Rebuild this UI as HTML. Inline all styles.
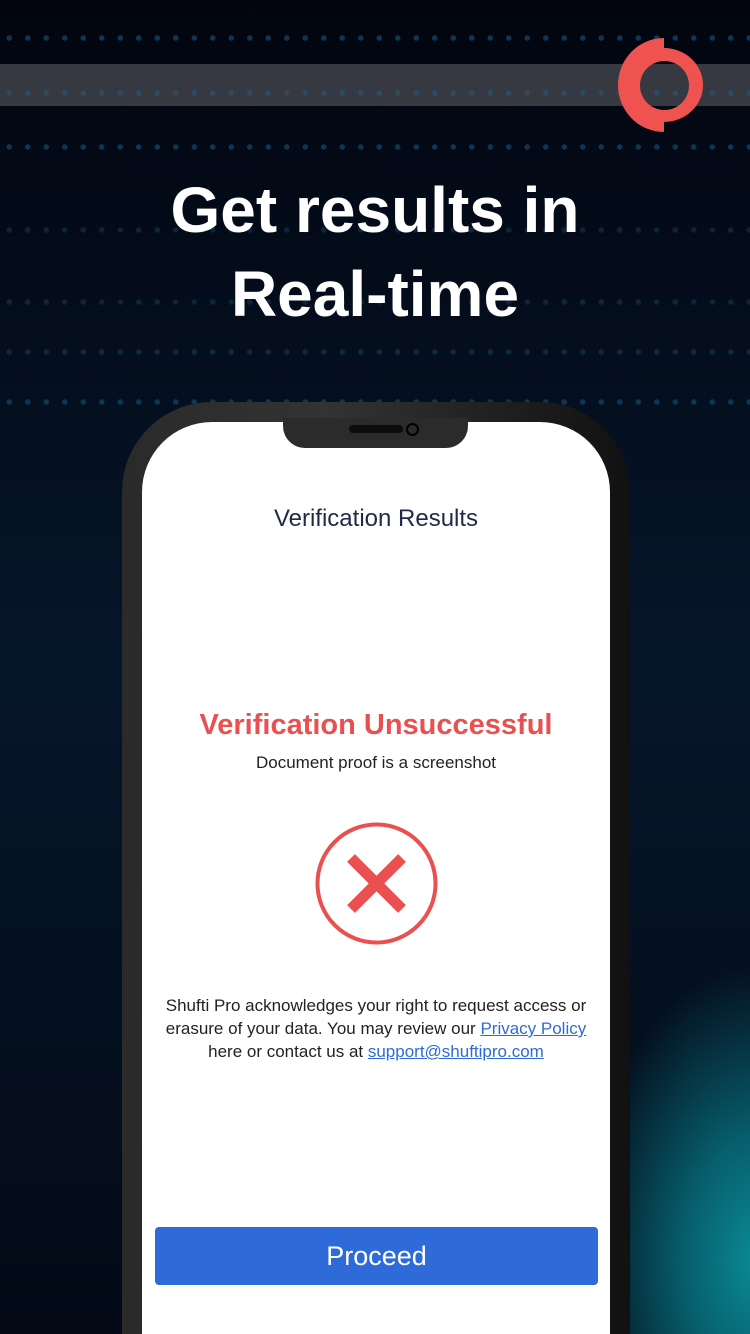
<!DOCTYPE html>
<html><head><meta charset="utf-8"><style>
*{margin:0;padding:0;box-sizing:border-box}
html,body{width:750px;height:1334px;overflow:hidden}
body{background:#02050f;font-family:"Liberation Sans",sans-serif;position:relative}
.bg{position:absolute;inset:0;background:radial-gradient(ellipse 260px 420px at 760px 1260px,#0a8c96 0%,#075d6b 30%,rgba(4,30,45,0) 70%),linear-gradient(180deg,#02050f 0%,#06162a 50%,#030a16 100%)}
.dots{position:absolute;left:0;right:0;height:8px;background-image:radial-gradient(circle,#0f3552 2.5px,transparent 3px);background-size:18.5px 8px}
.band{position:absolute;left:0;right:0;top:64px;height:42px;background:#363842}
h1{position:absolute;top:168px;left:0;width:750px;text-align:center;color:#fff;font-size:64px;line-height:84px;font-weight:bold}
.phone{position:absolute;left:122px;top:402px;width:508px;height:932px;border-radius:90px 90px 0 0;background:linear-gradient(90deg,#2a2a2a,#333 40%,#111)}
.screen{position:absolute;left:142px;top:422px;width:468px;height:912px;border-radius:70px 70px 0 0;background:#fff}
.notch{position:absolute;left:283px;top:418px;width:185px;height:30px;background:#2b2b2b;border-radius:0 0 22px 22px}
.spk{position:absolute;left:349px;top:425px;width:54px;height:8px;border-radius:4px;background:#0c0c0c}
.cam{position:absolute;left:406px;top:423px;width:13px;height:13px;border-radius:50%;border:2.5px solid #000}
.t{position:absolute;left:142px;width:468px;text-align:center}
a{color:#2f6bd8;text-decoration:underline}
</style></head><body>
<div class="bg"></div>
<div class="dots" style="top:34px"></div>
<div class="dots" style="top:143px"></div>
<div class="band"></div>
<div class="dots" style="top:89px;background-image:radial-gradient(circle,#2f4a60 2.5px,transparent 3px)"></div>
<div class="dots" style="top:226px;opacity:.6"></div>
<div class="dots" style="top:298px;opacity:.6"></div>
<div class="dots" style="top:348px;opacity:.7"></div>
<div class="dots" style="top:398px"></div>
<svg style="position:absolute;left:0;top:0" width="750" height="140">
<path fill="#ef5350" fill-rule="evenodd" d="M664 38 A46 47 0 0 0 664 132 V122 A39 37 0 0 0 664 48 Z M664.5 61 A24.5 24.5 0 1 0 664.5 110 A24.5 24.5 0 1 0 664.5 61 Z"/>
</svg>
<h1>Get results in<br>Real-time</h1>
<div class="phone"></div>
<div class="screen"></div>
<div class="notch"></div><div class="spk"></div><div class="cam"></div>
<div class="t" style="top:505px;font-size:24px;color:#1f2a44">Verification Results</div>
<div class="t" style="top:709px;font-size:29px;font-weight:bold;color:#e9504f">Verification Unsuccessful</div>
<div class="t" style="top:753px;font-size:17px;color:#222">Document proof is a screenshot</div>
<svg style="position:absolute;left:315px;top:822px" width="123" height="123" viewBox="0 0 123 123">
<circle cx="61.5" cy="61.5" r="59" fill="none" stroke="#e9504f" stroke-width="4"/>
<path d="M36 36 L87 87 M87 36 L36 87" stroke="#e9504f" stroke-width="11"/>
</svg>
<div class="t" style="top:994px;font-size:17px;line-height:23px;color:#222">Shufti Pro acknowledges your right to request access or<br>erasure of your data. You may review our <a>Privacy Policy</a><br>here or contact us at <a>support@shuftipro.com</a></div>
<div style="position:absolute;left:155px;top:1227px;width:443px;height:58px;border-radius:4px;background:#2e6bd9;color:#fff;font-size:27px;text-align:center;line-height:58px">Proceed</div>
</body></html>
